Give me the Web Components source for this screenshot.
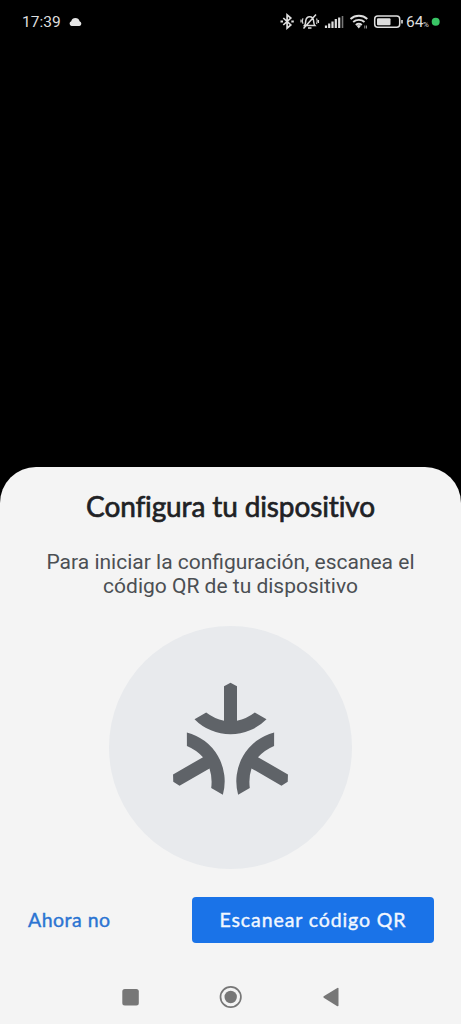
<!DOCTYPE html>
<html lang="es">
<head>
<meta charset="utf-8">
<title>Configura tu dispositivo</title>
<style>
html,body{margin:0;height:100%;background:#000;overflow:hidden}
</style>
</head>
<body>
<setup-screen></setup-screen>
<script>
const define = (name, markup) => customElements.define(name, class extends HTMLElement {
  constructor() {
    super();
    this.attachShadow({ mode: 'open' }).innerHTML = markup;
  }
});

define('status-bar', `
<style>
:host{display:flex;align-items:center;height:43px;box-sizing:border-box;padding:0 21px 0 22px;color:#dedede;font:15.500px/20px Roboto,sans-serif}
svg{display:block;flex:none}
.time{width:47px}
.icons{margin-left:auto;display:flex;align-items:center}
.pct{margin-left:4px;width:17px;font-size:15.500px}
.sign{font-size:8px;width:7px;padding-top:5px;line-height:15px}
</style>
<span class="time">17:39</span>
<svg width="13" height="10" viewBox="0 0 13 10" fill="#e4e4e4"><path d="M2.600 9A2.500 2.500 0 0 1 2.200 4.200 4.400 4.400 0 0 1 10.600 4.200 2.500 2.500 0 0 1 10.500 9Z"/></svg>
<div class="icons">
<svg width="160" height="24" viewBox="280 9 160 24" style="margin-right:-160px" fill="none" stroke="#dedede">
  <path d="M283.300 17l7.500 7-3.700 3.200V13.800l3.700 3.200-7.500 7" stroke-width="1.700"/>
  <path d="M280.500 20.500h2.500M291.300 20.500h2.500" stroke-width="2"/>
  <path d="M304.500 24.500c1.100-1.200 1-2.300 1.200-4.500.3-2.400 1.900-4.300 4-4.300s3.700 1.900 3.900 4.300c.2 2.200.2 3.300 1.300 4.500zM308 27h3.500M316 13.500L303.500 27.500" stroke-width="1.500"/>
  <path d="M303 17.200c-.9 1.700-.9 3.700 0 5.500M301 18.500v3M316.600 17.500c.9 1.700.9 3.700 0 5.500M318.500 19v3" stroke-width="1.100"/>
  <path d="M326 27v-2.500M329.200 27v-4.500M332.500 27v-6.500M335.800 27v-9M339.200 27V16.500" stroke-width="2.200"/>
  <path d="M342.500 27V15" stroke="#777" stroke-width="1.600"/>
  <path d="M350.500 18a12.500 12.500 0 0 1 16.800 0M353.200 21a8.500 8.500 0 0 1 11.300 0M355.800 23.900a4.700 4.700 0 0 1 6 0" stroke-width="1.900"/>
  <path d="M356.600 24.800q2.200-1.500 4.400 0L358.800 27.500z" fill="#dedede" stroke="none"/>
  <path d="M364.800 27.500v-3M366.500 24.500v3" stroke="#999" stroke-width="1"/>
  <rect x="374.700" y="15" width="25" height="11.300" rx="3" stroke-width="1.500"/>
  <rect x="377" y="17.200" width="13.500" height="7" rx="1" fill="#dedede" stroke="none"/>
  <path d="M402 19v3.500" stroke-width="1.600"/>
  <circle cx="435.700" cy="20.700" r="4" fill="#39c565" stroke="none"/>
</svg>
<span style="width:122px"></span><span class="pct">64</span><span class="sign">%</span><span style="width:10px"></span>
</div>`);

define('sheet-title', `
<style>
:host{display:block;text-align:center;font:400 28px/36px Lato,sans-serif;color:#202124;white-space:nowrap}
span{letter-spacing:-.13px;-webkit-text-stroke:.65px #202124}
</style><span><slot></slot></span>`);

define('sheet-text', `
<style>
:host{display:block;text-align:center;font:21px/24px Roboto,sans-serif;color:#4b4f53;white-space:nowrap}
</style><slot></slot>`);

define('matter-badge', `
<style>
:host{display:block;width:243px;height:243px;border-radius:50%;background:#e8eaed}
svg{display:block}
</style>
<svg width="243" height="243" viewBox="-121.500 -122.800 243 243" fill="#5f6368">
<defs><path id="arm" d="M0-66.100L6.500-62.600V-28Q16-30 24.300-36.300L36-29.600A50.500 50.500 0 0 1-36-29.600L-24.300-36.300Q-16-30-6.500-28V-62.600Z"/></defs>
<use href="#arm"/><use href="#arm" transform="rotate(120)"/><use href="#arm" transform="rotate(240)"/>
</svg>`);

define('action-button', `
<style>
:host{display:flex;align-items:center;justify-content:center;box-sizing:border-box;height:46px;padding-bottom:1px;border-radius:4px;font:400 19.500px/24px Lato,sans-serif;color:#2b74d2;white-space:nowrap}
:host([primary]){width:242px;background:#1a73e8;color:#f1f7ff}
span{letter-spacing:.5px;-webkit-text-stroke:.4px currentColor}
:host([primary]) span{letter-spacing:.9px}
</style><span><slot></slot></span>`);

define('nav-bar', `
<style>
:host{display:grid;grid-template-columns:repeat(3,100px);justify-content:center;justify-items:center;align-items:center;height:54px}
svg{display:block}
</style>
<svg width="24" height="24" fill="#777"><rect x="3.300" y="4" width="16.500" height="16.500" rx="2.500"/></svg>
<svg width="24" height="24" fill="none" stroke="#777"><circle cx="11.700" cy="12" r="10.200" stroke-width="1.700"/><circle cx="11.700" cy="12" r="6.200" fill="#777" stroke="none"/></svg>
<svg width="24" height="24" fill="#777"><path d="M4.700 11.300Q4 12 4.700 12.700L18.300 21.300Q19.500 21.500 19.500 20.500V3.500Q19.500 2.500 18.300 2.900Z"/></svg>`);

define('bottom-sheet', `
<style>
:host{display:flex;flex-direction:column;align-items:center;box-sizing:border-box;height:557px;padding-top:21px;background:#f4f4f4;border-radius:36px 36px 0 0}
.text{margin-top:26px}
.badge{margin-top:28px}
.actions{display:flex;justify-content:space-between;align-self:stretch;margin-top:28px;padding:0 27px 0 28px}
.nav{margin-top:auto;align-self:stretch}
</style>
<slot name="title"></slot>
<div class="text"><slot name="text"></slot></div>
<div class="badge"><slot></slot></div>
<div class="actions"><slot name="actions"></slot></div>
<div class="nav"><slot name="nav"></slot></div>`);

define('setup-screen', `
<style>
:host{display:flex;flex-direction:column;justify-content:space-between;height:1024px;width:461px;background:#000}
</style>
<status-bar></status-bar>
<bottom-sheet>
<sheet-title slot="title">Configura tu dispositivo</sheet-title>
<sheet-text slot="text">Para iniciar la configuración, escanea el<br>código QR de tu dispositivo</sheet-text>
<matter-badge></matter-badge>
<action-button slot="actions">Ahora no</action-button>
<action-button slot="actions" primary>Escanear código QR</action-button>
<nav-bar slot="nav"></nav-bar>
</bottom-sheet>`);
</script>
</body>
</html>
